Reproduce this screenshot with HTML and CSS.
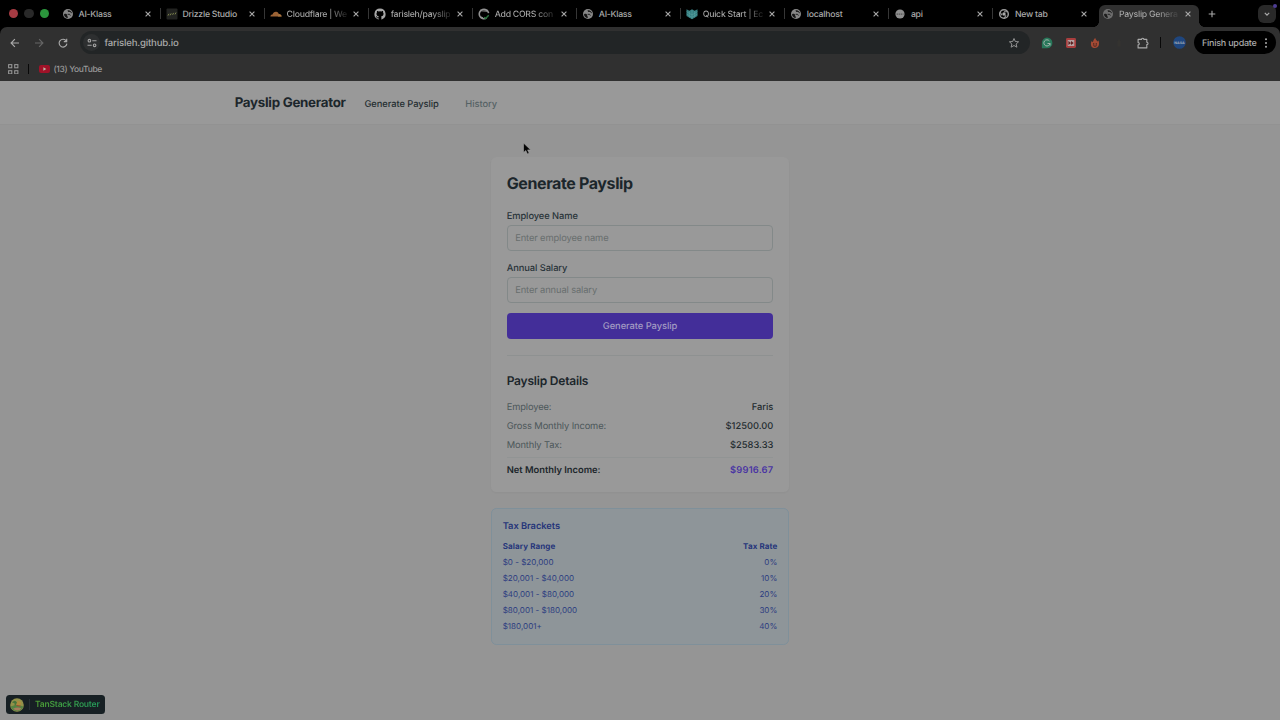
FILE: index.html
```html
<!DOCTYPE html>
<html lang="en">
<head>
<meta charset="utf-8">
<title>Payslip Generator</title>
<link rel="stylesheet" href="styles.css">
</head>
<body>
<svg class="defs" aria-hidden="true">
  <symbol id="globe" viewBox="0 0 12 12"><circle cx="6" cy="6" r="5" fill="#878787"/><path d="M2 6.200C3.700 5.300 5 6 5.100 7.200S6.200 8.300 5.700 9.900C3.600 9.900 2 8.200 2 6.200zM5.600 2.200C5.600 3.800 6.700 4.200 7.600 3.900S8.600 5.500 10 5.300C9.700 3.300 8 1.900 5.600 2.200z" fill="#161616"/><path d="M5.600 6.300H7.600L8.400 7.600" fill="none" stroke="#161616" stroke-width=".9"/></symbol>
  <symbol id="close" viewBox="0 0 8 8"><path d="M1.600 1.600 6.400 6.400M6.400 1.600 1.600 6.400" stroke="#aaa" stroke-width="1.100"/></symbol>
</svg>
<div class="browser">
  <div class="tabs">
    <div class="lights"><i class="red"></i><i class="gray"></i><i class="green"></i></div>
    <div class="tab"><svg class="fav"><use href="#globe"/></svg><span class="title">AI-Klass</span><svg class="x"><use href="#close"/></svg></div>
    <div class="tab"><svg class="fav" viewBox="0 0 12 12"><rect x=".5" y=".5" width="11" height="11" rx="1" fill="#222321"/><path d="M2 7.600 3 5.800M4.200 7.300 5.200 5.400M6.600 6.800 7.600 4.900M9 6.400 10 4.500" stroke="#899052" stroke-width=".9"/></svg><span class="title">Drizzle Studio</span><svg class="x"><use href="#close"/></svg></div>
    <div class="tab"><svg class="fav" viewBox="0 0 12 12"><path d="M.4 8.600C.5 7.200 1.600 6.600 2.500 6.600 3 4.500 4.600 3.500 6.200 3.700c1.500.2 2.300 1.200 2.600 2.300 1.600-.1 2.700 1 2.800 2.600z" fill="#9c6335"/><path d="M8.900 6.200c1.600-.1 2.700 1 2.700 2.400H7.800z" fill="#a8763f"/></svg><span class="title fade">Cloudflare | We</span><svg class="x"><use href="#close"/></svg></div>
    <div class="tab"><svg class="fav" viewBox="0 0 16 16"><path fill="#a6a6a6" d="M8 .8a7.400 7.400 0 0 0-2.340 14.420c.37.07.5-.16.5-.36v-1.260c-2.050.45-2.490-.99-2.490-.99-.34-.86-.83-1.090-.83-1.090-.67-.46.05-.45.05-.45.75.05 1.140.77 1.140.77.66 1.140 1.740.81 2.160.62.07-.48.26-.81.47-.99-1.640-.19-3.370-.82-3.370-3.660 0-.81.29-1.470.77-1.990-.08-.19-.34-.94.07-1.960 0 0 .62-.2 2.030.76a7.100 7.100 0 0 1 3.700 0c1.410-.96 2.030-.76 2.030-.76.41 1.020.15 1.770.07 1.960.48.52.77 1.180.77 1.990 0 2.850-1.730 3.470-3.380 3.650.26.23.5.680.5 1.370v2.030c0 .2.13.43.5.36A7.400 7.400 0 0 0 8 .8z"/></svg><span class="title fade">farisleh/payslip</span><svg class="x"><use href="#close"/></svg></div>
    <div class="tab"><svg class="fav" viewBox="0 0 12 12"><path d="M8.400 10.100A4.700 4.700 0 1 1 10.600 5.200" fill="none" stroke="#929292" stroke-width="1.600"/><path d="M2.600 3.200V1.500l2 .9h3l2-.9v2.200z" fill="#929292"/><path d="M2.500 8.200 5 9.300V11L3.200 10.300z" fill="#929292"/><path d="M6 9.200 7.600 10.500 10.700 7.300" fill="none" stroke="#28733c" stroke-width="1.300"/></svg><span class="title fade">Add CORS con</span><svg class="x"><use href="#close"/></svg></div>
    <div class="tab"><svg class="fav"><use href="#globe"/></svg><span class="title">AI-Klass</span><svg class="x"><use href="#close"/></svg></div>
    <div class="tab"><svg class="fav" viewBox="0 0 12 12"><path d="M.5 1.200 3.400 2.800 6 1.200 8.600 2.800 11.500 1.200V8L6 11.300.5 8z" fill="#347e80"/><path d="M.5 3.600 6 7l5.500-3.400M.5 6 6 9.300 11.500 6M3.300 3v6.500M6 2v9M8.700 3v6.500" stroke="#62a7a6" stroke-width=".5" fill="none"/></svg><span class="title fade">Quick Start | Ec</span><svg class="x"><use href="#close"/></svg></div>
    <div class="tab"><svg class="fav"><use href="#globe"/></svg><span class="title">localhost</span><svg class="x"><use href="#close"/></svg></div>
    <div class="tab"><svg class="fav" viewBox="0 0 12 12"><circle cx="6" cy="6" r="4.600" fill="#8f8f8f"/><path d="M2.500 6.200h7" stroke="#555" stroke-width="1.300" stroke-dasharray="1.500 .6"/></svg><span class="title">api</span><svg class="x"><use href="#close"/></svg></div>
    <div class="tab last"><svg class="fav" viewBox="0 0 12 12"><circle cx="6" cy="6" r="4.300" fill="none" stroke="#999" stroke-width="1.500"/><circle cx="6" cy="6" r="1.700" fill="#aaa"/><path d="M6 3.700h4.200M4 7.200 1.900 3.700M8 7.200 6 10.700" stroke="#999" stroke-width="1.100"/></svg><span class="title">New tab</span><svg class="x"><use href="#close"/></svg></div>
    <div class="tab active"><svg class="fav dim"><use href="#globe"/></svg><span class="title fade">Payslip Genera</span><svg class="x"><use href="#close"/></svg></div>
    <svg class="plus" viewBox="0 0 10 10"><path d="M5 1.700v6.600M1.700 5h6.600" stroke="#aaa" stroke-width="1.100"/></svg>
    <div class="search"><svg viewBox="0 0 8 8"><path d="M1.800 2.900 4 5.100 6.200 2.900" fill="none" stroke="#aaa" stroke-width="1.200"/></svg><i></i></div>
  </div>
  <div class="toolbar">
    <svg class="nav" viewBox="0 0 12 12"><path d="M10 6H2.300M5.900 2.200 2.100 6 5.900 9.800" fill="none" stroke="#aaa" stroke-width="1.150"/></svg>
    <svg class="nav" viewBox="0 0 12 12"><path d="M2 6h7.700M6.100 2.200 9.900 6 6.100 9.800" fill="none" stroke="#666" stroke-width="1.150"/></svg>
    <svg class="nav" viewBox="0 0 12 12"><path d="M9.300 4A3.900 3.900 0 1 0 9.900 6.700M9.700 1.700V4.600H6.800" fill="none" stroke="#aaa" stroke-width="1.150"/></svg>
    <div class="url">
      <span class="tune"><svg viewBox="0 0 12 12"><g fill="none" stroke="#a5a5a5" stroke-width="1.100"><circle cx="3.400" cy="3.700" r="1.300"/><path d="M6.300 3.700h4.200M1.500 8.300h4.200"/><circle cx="8.600" cy="8.300" r="1.300"/></g></svg></span>
      <span class="address">farisleh.github.io</span>
      <svg class="star" viewBox="0 0 12 12"><path d="M6 1.500 7.300 4.500 10.600 4.800 8.100 7 8.900 10.200 6 8.500 3.100 10.200 3.900 7 1.400 4.800 4.700 4.500z" fill="none" stroke="#999" stroke-width=".95"/></svg>
    </div>
    <div class="exts">
      <svg viewBox="0 0 12 12"><path d="M6 .5A5.400 5.400 0 0 1 6 11.300H.9V6A5.300 5.300 0 0 1 6 .5z" fill="#28775a"/><path d="M8.400 4A3.100 3.100 0 1 0 9 6.500H6.500M9 6.400V8.600" fill="none" stroke="#a4b5ad" stroke-width="1"/></svg>
      <svg viewBox="0 0 12 12"><rect x="1" y="1" width="10" height="10" rx="1.400" fill="#a83e3e"/><rect x="2.700" y="3" width="6.600" height="6" rx=".5" fill="#b5a0a0"/><path d="M3.400 4 6 6 3.400 8zM6 4 8.700 6 6 8z" fill="#5c2020"/></svg>
      <svg viewBox="0 0 12 12"><path d="M6.300.8C6.100 2.400 7.800 3 8.300 4.500L9.500 3.600C10.800 7.200 9.900 11.100 6 11.100S1.300 8 2.300 4.300L3.900 5C4.500 3.800 4.500 2.500 6.300.8z" fill="#a34a34"/><circle cx="4.700" cy="6.900" r=".7" fill="#301d1b"/><circle cx="7.300" cy="6.900" r=".7" fill="#301d1b"/><path d="M4.300 8.600Q6 10 7.700 8.600" stroke="#301d1b" fill="none" stroke-width=".8"/></svg>
      <svg viewBox="0 0 12 12"><path d="M4.500 4.500 6 2l1.500 2.500v5h-3z" fill="#343330"/></svg>
      <svg viewBox="0 0 12 12"><path d="M1.100 2.400H4.500A1.200 1.200 0 0 1 6.900 2.400H9.800V5.200A1.200 1.200 0 0 1 9.800 7.600V10.900H1.100V7.900A1.200 1.200 0 0 0 1.100 5.500z" fill="none" stroke="#aaa" stroke-width="1.150" stroke-linejoin="round"/></svg>
    </div>
    <i class="sep"></i>
    <svg class="avatar" viewBox="0 0 12 12"><circle cx="6" cy="6" r="5.800" fill="#1f467e"/><text x="6" y="7.200" text-anchor="middle" font-size="3.300" font-weight="700" fill="#a3aab7">NASA</text></svg>
    <div class="update"><span>Finish update</span><svg viewBox="0 0 4 12"><g fill="#aaa"><circle cx="2" cy="2.300" r="1"/><circle cx="2" cy="6" r="1"/><circle cx="2" cy="9.700" r="1"/></g></svg></div>
  </div>
  <div class="bookmarks">
    <svg class="grid" viewBox="0 0 10 10"><g fill="none" stroke="#999" stroke-width="1"><rect x=".6" y=".6" width="3" height="3"/><rect x="6.400" y=".6" width="3" height="3"/><rect x=".6" y="6.400" width="3" height="3"/><rect x="6.400" y="6.400" width="3" height="3"/></g></svg>
    <i></i>
    <svg class="yt" viewBox="0 0 11 8"><rect width="11" height="8" rx="2" fill="#a01228"/><path d="M4.400 2.300 7.300 4 4.400 5.700z" fill="#bba"/></svg>
    <span>(13) YouTube</span>
  </div>
</div>
<header class="site">
  <span class="brand">Payslip Generator</span>
  <a class="link on">Generate Payslip</a>
  <a class="link">History</a>
</header>
<main>
  <section class="card">
    <h2>Generate Payslip</h2>
    <label>Employee Name</label>
    <div class="input">Enter employee name</div>
    <label>Annual Salary</label>
    <div class="input">Enter annual salary</div>
    <div class="button">Generate Payslip</div>
    <div class="details">
      <h3>Payslip Details</h3>
      <div class="row"><span>Employee:</span><b>Faris</b></div>
      <div class="row"><span>Gross Monthly Income:</span><b>$12500.00</b></div>
      <div class="row"><span>Monthly Tax:</span><b>$2583.33</b></div>
      <div class="row net"><span>Net Monthly Income:</span><b>$9916.67</b></div>
    </div>
  </section>
  <section class="tax">
    <h4>Tax Brackets</h4>
    <div class="trow head"><span>Salary Range</span><span>Tax Rate</span></div>
    <div class="trow"><span>$0 - $20,000</span><span>0%</span></div>
    <div class="trow"><span>$20,001 - $40,000</span><span>10%</span></div>
    <div class="trow"><span>$40,001 - $80,000</span><span>20%</span></div>
    <div class="trow"><span>$80,001 - $180,000</span><span>30%</span></div>
    <div class="trow"><span>$180,001+</span><span>40%</span></div>
  </section>
</main>
<div class="devtools">
  <svg viewBox="0 0 14 14"><circle cx="7" cy="7" r="6.800" fill="#93914a"/><path d="M.6 8.500Q7 5.500 13.400 8.500A6.800 6.800 0 0 1 .6 8.500z" fill="#548443"/><circle cx="8.600" cy="5.300" r="2.400" fill="#ae8a3c"/><path d="M2 4.500Q5 1 7 4.600L4.800 8.700 4.500 5.300z" fill="#47753b"/><path d="M3 10.800Q8 8.500 11.500 10.600Q7.500 14.500 3 10.800z" fill="#a77b5c"/><path d="M6.500 7.300 10.500 8.200" stroke="#a24c32" stroke-width="1.100"/></svg>
  <i></i><span>TanStack Router</span>
</div>
<svg class="cursor" viewBox="0 0 10 14"><path d="M1.500 1v9.600L3.800 8.500 5.400 12 7.200 11.200 5.600 7.900H8.700z" fill="#050505" stroke="#a3a3a3" stroke-width=".6"/></svg>
</body>
</html>
```
FILE: styles.css
```css
* { box-sizing: border-box; }
body { margin: 0; width: 1280px; height: 720px; overflow: hidden; background: #959595; font-family: Inter, "Liberation Sans", sans-serif; font-size: 9.333px; color: #1c262b; text-rendering: geometricPrecision; }
.defs { position: absolute; width: 0; height: 0; }
svg { display: block; flex: none; }
h2, h3, h4 { margin: 0; }

.browser { height: 81px; background: #000; color: #aaa; }
.tabs { display: flex; align-items: center; height: 27px; position: relative; }
.lights { display: flex; gap: 6px; width: 56.500px; padding-left: 8.500px; }
.lights i { width: 9.500px; height: 9.500px; border-radius: 50%; }
.red { background: #a63b43; }
.gray { background: #292929; }
.green { background: #2b963c; }
.tab { position: relative; display: flex; align-items: center; flex: none; width: 104.050px; height: 27px; padding: 1px 9px 0 5.500px; }
.tab:not(.last):not(.active)::after { content: ""; position: absolute; right: 0; top: 8px; width: 1px; height: 11px; background: #363636; }
.fav { width: 12px; height: 12px; }
.dim { opacity: .7; }
.title { flex: none; margin-left: 4.500px; padding-top: 1px; white-space: nowrap; line-height: 14px; font-size: 8.700px; font-weight: 450; letter-spacing: -.25px; }
.fade { background: linear-gradient(90deg, #aaa 40px, #222 59px) no-repeat; background-size: 60px 100%; -webkit-background-clip: text; background-clip: text; color: transparent; }
.active .fade { background-image: linear-gradient(90deg, #aaa 38px, #454545 57px); }
.x { width: 8px; height: 8px; margin-left: auto; }
.active::before { content: ""; position: absolute; z-index: -1; left: 2px; right: 2px; top: 5px; bottom: 0; background: #303030; border-radius: 6px 6px 0 0; }
.tab.active { z-index: 0; }
.active::after { content: ""; position: absolute; z-index: -1; left: -4px; right: -4px; bottom: 0; height: 6px; background: radial-gradient(circle at 0 0, transparent 5.800px, #303030 6.200px) left / 6px 6px no-repeat, radial-gradient(circle at 100% 0, transparent 5.800px, #303030 6.200px) right / 6px 6px no-repeat; }
.plus { width: 10px; height: 10px; margin-left: 5.500px; margin-top: 1px; }
.search { position: relative; display: flex; align-items: center; justify-content: center; width: 18px; height: 18px; margin-left: auto; margin-right: 4px; margin-top: 1px; border-radius: 6px; background: #292929; }
.search svg { width: 8px; height: 8px; }
.search i { position: absolute; right: -1px; top: -1px; width: 4px; height: 4px; border-radius: 50%; background: #4d3d94; }

.toolbar { display: flex; align-items: center; height: 31px; padding: 0 4px 0 9px; background: #303030; border-radius: 7px 7px 0 0; }
.nav { width: 12px; height: 12px; margin-right: 12px; }
.url { display: flex; align-items: center; width: 950px; height: 23px; margin-left: -1px; padding: 0 10px 0 3px; border-radius: 12px; background: #222526; }
.tune { display: flex; align-items: center; justify-content: center; width: 17px; height: 17px; border-radius: 50%; background: #2d2f30; }
.tune svg, .star { width: 12px; height: 12px; }
.address { margin-left: 4.500px; padding-top: 1px; font-size: 9.600px; font-weight: 450; letter-spacing: -.18px; }
.star { margin-left: auto; }
.exts { display: flex; gap: 12px; margin-left: 11px; }
.exts svg { width: 12px; height: 12px; }
.sep { width: 1.200px; height: 11px; margin: 0 11.500px 0 11px; background: #080808; }
.avatar { width: 13px; height: 13px; }
.update { display: flex; align-items: center; justify-content: space-between; width: 82px; height: 22.500px; margin-left: auto; padding: 0 8px; border-radius: 12px; background: #000; font-size: 9px; font-weight: 500; letter-spacing: -.25px; white-space: nowrap; }
.update span { padding-top: 1px; }
.update svg { width: 4px; height: 12px; }

.bookmarks { display: flex; align-items: center; height: 22px; padding-left: 8px; font-size: 8.500px; font-weight: 450; letter-spacing: -.35px; color: #999; background: #303030; box-shadow: 0 1px #303030; }
.bookmarks span { padding-top: 1.500px; }
.grid { width: 10.500px; height: 10.500px; }
.bookmarks i { width: 1px; height: 10px; margin: 0 9.500px; background: #080808; }
.yt { width: 11px; height: 8px; margin-right: 4px; }

.site { display: flex; align-items: center; height: 44px; padding-left: 234.700px; border-bottom: 1px solid #929292; background: #999; }
.brand { width: 129.700px; padding-top: 1px; font-size: 13.333px; font-weight: 700; letter-spacing: -.28px; white-space: nowrap; }
.link { margin-right: 26.500px; padding-top: 3px; font-weight: 500; letter-spacing: -.06px; color: #566265; }
.link.on { color: #252e31; }

main { display: flex; flex-direction: column; gap: 16px; width: 298.667px; margin: 31.500px auto 0; }
.card { height: 335.500px; padding: 16px; border-radius: 5.333px; background: #999; box-shadow: 0 1px 2px rgba(0,0,0,.035); }
h2 { height: 21.333px; margin-bottom: 15.500px; font-size: 16px; line-height: 21.333px; letter-spacing: -.38px; }
label { display: block; height: 13.333px; margin-bottom: 2.667px; line-height: 16px; font-weight: 500; letter-spacing: -.08px; color: #293439; }
.input { height: 25.600px; margin-bottom: 10.400px; padding: 0 7.500px; border: 1px solid #838989; border-radius: 4px; line-height: 25px; letter-spacing: -.12px; color: #686e6e; }
.button { height: 25.600px; border-radius: 4px; background: #432e99; color: #a29bc2; text-align: center; line-height: 28px; font-weight: 500; letter-spacing: -.06px; }
.details { margin-top: 16px; padding-top: 16px; border-top: 1px solid #8e9191; }
h3 { height: 18.667px; margin-bottom: 10.800px; font-size: 12px; line-height: 18.667px; font-weight: 600; letter-spacing: -.2px; }
.row { display: flex; justify-content: space-between; height: 13.333px; margin-bottom: 5.333px; line-height: 13.800px; color: #4c5759; }
.row span { letter-spacing: -.12px; }
.row b { font-weight: 500; color: #242c30; }
.net { height: 19.333px; padding-top: 5.500px; border-top: 1px solid #919494; line-height: 13.333px; font-weight: 600; color: #1c262b; }
.row.net span { letter-spacing: 0; }
.net b { font-weight: 600; letter-spacing: .2px; color: #4a35a3; }

.tax { height: 136.500px; padding: 11px 11px 9px; border: 1px solid #7f909a; border-radius: 5.333px; background: #8e9599; color: #2b3b80; }
h4 { height: 13.333px; margin-bottom: 5px; font-size: 9.333px; line-height: 13.333px; font-weight: 600; letter-spacing: -.05px; color: #263679; }
.trow { display: flex; justify-content: space-between; height: 16px; font-size: 8px; line-height: 16px; letter-spacing: .03px; }
.head { font-weight: 700; letter-spacing: .1px; color: #26357b; }

.devtools { position: absolute; left: 5.500px; top: 695px; display: flex; align-items: center; width: 99px; height: 19px; padding-left: 4px; border-radius: 3.500px; background: #172024; color: #3a9d45; font-size: 8.500px; font-weight: 600; letter-spacing: -.2px; white-space: nowrap; }
.devtools svg { width: 14px; height: 14px; }
.devtools i { width: 1px; height: 11px; margin: 0 5.500px 0 5px; background: #283136; }
.devtools span { background: linear-gradient(90deg, #4f9d33, #229a5c); -webkit-background-clip: text; background-clip: text; color: transparent; }
.cursor { position: absolute; left: 522px; top: 142px; width: 10px; height: 14px; }
```
